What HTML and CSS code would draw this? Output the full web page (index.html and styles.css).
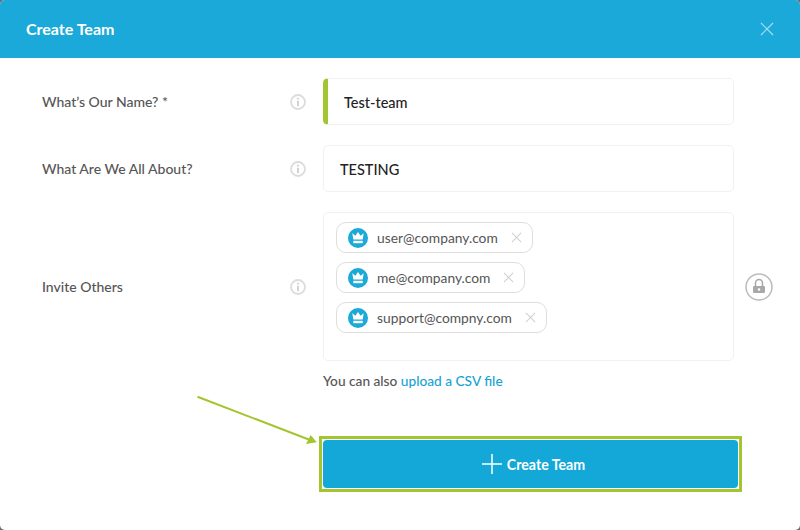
FILE: index.html
```html
<!DOCTYPE html>
<html lang="en">
<head>
<meta charset="utf-8">
<title>Create Team</title>
<link rel="stylesheet" href="styles.css">
</head>
<body>
<div class="modal">
  <header class="head">
    <h1 class="title">Create Team</h1>
    <svg class="close" width="14" height="14" viewBox="0 0 14 14"><path d="M1 1l12 12M13 1L1 13"/></svg>
  </header>
  <form class="form">
    <div class="row">
      <label class="label">What’s Our Name? *</label>
      <svg class="info" viewBox="0 0 16 16"><circle cx="8" cy="8" r="7"/><rect class="dot" x="7.2" y="3.8" width="1.6" height="1.7"/><rect class="dot" x="7.2" y="6.8" width="1.6" height="5.4"/></svg>
      <div class="field required">Test-team</div>
    </div>
    <div class="row">
      <label class="label">What Are We All About?</label>
      <svg class="info" viewBox="0 0 16 16"><circle cx="8" cy="8" r="7"/><rect class="dot" x="7.2" y="3.8" width="1.6" height="1.7"/><rect class="dot" x="7.2" y="6.8" width="1.6" height="5.4"/></svg>
      <div class="field">TESTING</div>
    </div>
    <div class="row">
      <label class="label">Invite Others</label>
      <svg class="info" viewBox="0 0 16 16"><circle cx="8" cy="8" r="7"/><rect class="dot" x="7.2" y="3.8" width="1.6" height="1.7"/><rect class="dot" x="7.2" y="6.8" width="1.6" height="5.4"/></svg>
      <div class="tags">
        <div class="tag">
          <svg class="crown" viewBox="0 0 20 20"><circle class="crown-bg" cx="10" cy="10" r="10"/><path class="crown-top" d="M4.3 5.2l3 2.500L10 3.900l2.700 3.800 3-2.500-1 6.400H5.300z"/><rect class="crown-top" x="5.300" y="12.800" width="9.400" height="2.400"/></svg>
          <span>user@company.com</span>
          <svg class="remove" viewBox="0 0 12 12"><path d="M1 1l10 10M11 1L1 11"/></svg>
        </div>
        <div class="tag">
          <svg class="crown" viewBox="0 0 20 20"><circle class="crown-bg" cx="10" cy="10" r="10"/><path class="crown-top" d="M4.3 5.2l3 2.500L10 3.900l2.700 3.800 3-2.500-1 6.400H5.300z"/><rect class="crown-top" x="5.300" y="12.800" width="9.400" height="2.400"/></svg>
          <span>me@company.com</span>
          <svg class="remove" viewBox="0 0 12 12"><path d="M1 1l10 10M11 1L1 11"/></svg>
        </div>
        <div class="tag">
          <svg class="crown" viewBox="0 0 20 20"><circle class="crown-bg" cx="10" cy="10" r="10"/><path class="crown-top" d="M4.3 5.2l3 2.500L10 3.900l2.700 3.800 3-2.500-1 6.400H5.300z"/><rect class="crown-top" x="5.300" y="12.800" width="9.400" height="2.400"/></svg>
          <span>support@compny.com</span>
          <svg class="remove" viewBox="0 0 12 12"><path d="M1 1l10 10M11 1L1 11"/></svg>
        </div>
      </div>
      <svg class="lock" viewBox="0 0 28 28"><circle cx="14" cy="14" r="13"/><path class="lock-shackle" d="M10.500 13V10a3.500 3.500 0 0 1 7 0v3"/><path class="lock-body" fill-rule="evenodd" d="M9 13h10a1 1 0 0 1 1 1v5a1 1 0 0 1-1 1H9a1 1 0 0 1-1-1v-5a1 1 0 0 1 1-1zM14 15.200a1.300 1.300 0 1 0 0 2.600 1.300 1.300 0 0 0 0-2.600z"/></svg>
    </div>
    <p class="csv">You can also <a class="link" href="#">upload a CSV file</a></p>
    <div class="highlight">
      <button class="submit" type="button">
        <svg class="plus" width="20" height="20" viewBox="0 0 20 20"><path d="M10 0v20M0 10h20"/></svg>
        <span>Create Team</span>
      </button>
    </div>
  </form>
  <svg class="arrow" width="130" height="55" viewBox="0 0 130 55"><path class="arrow-line" d="M0.500 1.700L113 45"/><path class="arrow-head" d="M119.700 47.300L109 49L113.700 40z"/></svg>
</div>
</body>
</html>
```
FILE: styles.css
```css
* { box-sizing: border-box; }
html, body { margin: 0; height: 100%; background: #6d6d6d; }
body { font-family: Lato, "Open Sans", sans-serif; }
.modal {
  position: relative;
  width: 800px;
  height: 530px;
  background: #fff;
  border-radius: 5px;
  overflow: hidden;
}
.head {
  height: 58px;
  background: #1aa9d8;
  display: flex;
  align-items: center;
  justify-content: space-between;
  padding: 0 26px;
}
.title { margin: 0; font-size: 16px; font-weight: 700; color: #fff; line-height: 20px; }
.close { fill: none; stroke: #a5def0; stroke-width: 1.2; }
.form { padding: 20px 0 0 42px; display: flex; flex-direction: column; }
.row { display: flex; align-items: center; margin-bottom: 20px; }
.label { width: 248px; font-size: 14px; font-weight: 500; color: #555; }
.info { width: 16px; height: 16px; margin-right: 17px; flex: none; }
.info circle { fill: none; stroke: #dcdcdc; stroke-width: 1.800; }
.info .dot { fill: #c8c8c8; }
.field {
  width: 411px;
  height: 47px;
  border: 1px solid #edf2f7;
  border-radius: 5px;
  background: #fff;
  padding: 1px 0 0 16px;
  display: flex;
  align-items: center;
  font-size: 14.500px;
  font-weight: 500;
  color: #222;
}
.required { border-left: 5px solid #a3c52f; padding-left: 16px; }
.tags {
  width: 411px;
  height: 149px;
  border: 1px solid #edf2f7;
  border-radius: 5px;
  padding: 9px 12px;
  display: flex;
  flex-direction: column;
  align-items: flex-start;
  gap: 9px;
}
.tag {
  height: 31px;
  border: 1px solid #dedede;
  border-radius: 10px;
  display: flex;
  align-items: center;
  padding: 0 10px 0 11px;
  font-size: 13.800px;
  font-weight: 400;
  color: #555;
}
.crown { width: 20px; height: 20px; margin-right: 9px; flex: none; }
.crown-bg { fill: #1aa9d8; }
.crown-top { fill: #fff; }
.remove { width: 11px; height: 11px; margin-left: 13px; fill: none; stroke: #cfcfcf; stroke-width: 1.100; flex: none; }
.lock { width: 28px; height: 28px; margin-left: 11px; flex: none; }
.lock circle { fill: none; stroke: #bcbcbc; stroke-width: 1.500; }
.lock-shackle { fill: none; stroke: #a8a8a8; stroke-width: 1.500; }
.lock-body { fill: #a8a8a8; }
.csv { margin: -10px 0 0 281px; font-size: 13.700px; line-height: 20px; color: #555; font-weight: 500; }
.link { color: #16a3d3; text-decoration: none; }
.highlight {
  margin: 45px 0 0 277px;
  width: 423px;
  height: 56px;
  border: 3px solid #a3c52f;
  padding: 1px;
  background: #fff;
}
.submit {
  width: 100%;
  height: 100%;
  border: 0;
  border-radius: 4px;
  background: #13a8d7;
  color: #fff;
  font: 700 14.200px Lato, sans-serif;
  display: flex;
  align-items: center;
  justify-content: center;
  gap: 5px;
  padding: 0 0 0 6px;
}
.plus { fill: none; stroke: #fff; stroke-width: 1.500; }
.arrow { position: absolute; left: 197px; top: 395px; overflow: visible; }
.arrow-line { fill: none; stroke: #a3c52f; stroke-width: 2; }
.arrow-head { fill: #a3c52f; }
```
